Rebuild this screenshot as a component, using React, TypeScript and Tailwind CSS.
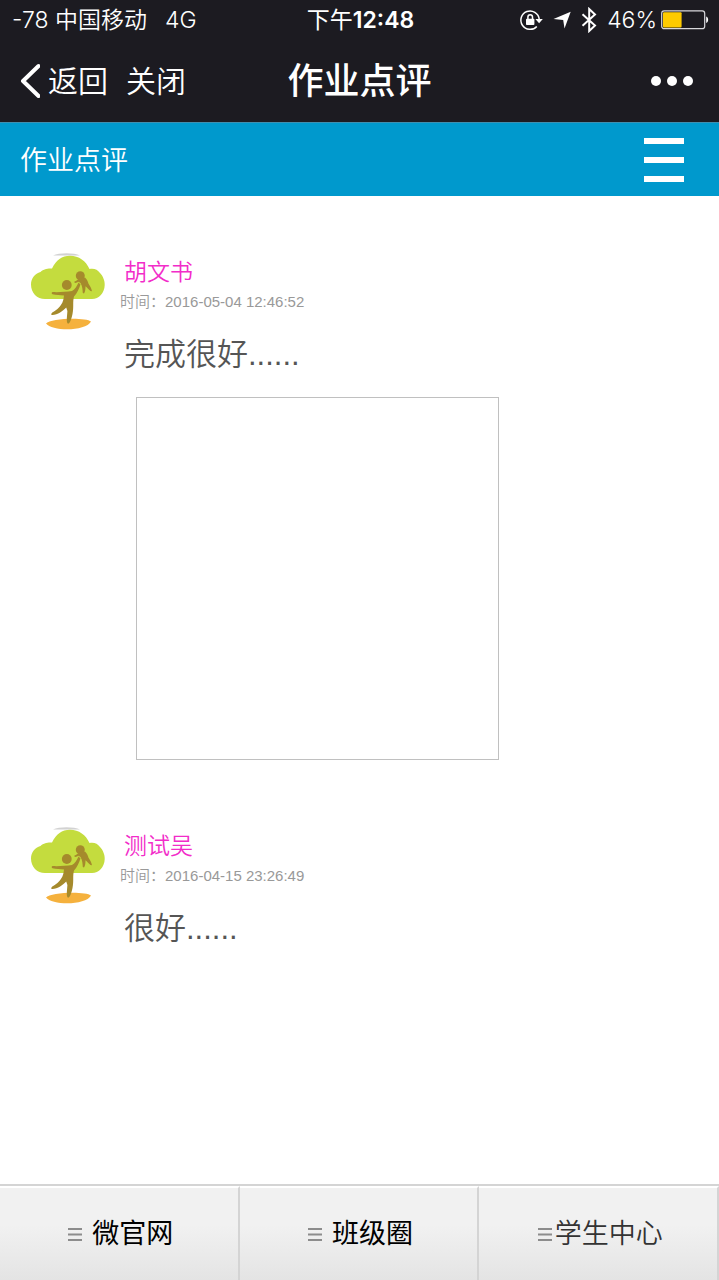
import React from "react";

type Review = {
  name: string;
  time: string;
  text: string;
  hasImage?: boolean;
};

const reviews: Review[] = [
  { name: "胡文书", time: "2016-05-04 12:46:52", text: "完成很好......", hasImage: true },
  { name: "测试吴", time: "2016-04-15 23:26:49", text: "很好......" },
];

function RotationLockIcon() {
  return (
    <svg className="h-6 w-6" viewBox="0 0 24 24" fill="none" aria-hidden="true">
      <path d="M17.8 18.4A9.2 9.2 0 1 1 20.200 11" stroke="#fff" strokeWidth="1.5" />
      <path d="M16.400 11h7.400l-3.700 4.300z" fill="#fff" />
      <rect x="7" y="10.800" width="8.400" height="6.200" rx="0.8" fill="#fff" />
      <path d="M8.900 11.200V9a2.300 2.300 0 0 1 4.600 0v2.200" stroke="#fff" strokeWidth="1.500" />
    </svg>
  );
}

function LocationIcon() {
  return (
    <svg className="h-[18px] w-[18px]" viewBox="0 0 18 18" aria-hidden="true">
      <path d="M17.700.7 11.500 17.600 10.200 8.900.5 8z" fill="#fff" />
    </svg>
  );
}

function BluetoothIcon() {
  return (
    <svg className="h-[26px] w-4" viewBox="0 0 16 26" fill="none" aria-hidden="true">
      <path d="M1.500 7.200 14 18.600 8.200 24V2L14 7.400 1.500 18.800" stroke="#fff" strokeWidth="2" />
    </svg>
  );
}

function BatteryIcon() {
  return (
    <svg className="h-5 w-12" viewBox="0 0 48 20" fill="none" aria-hidden="true">
      <rect x="0.7" y="0.9" width="43" height="17.8" rx="2.5" stroke="#d8d8dc" strokeWidth="1.2" />
      <rect x="2" y="2.2" width="18.6" height="15.2" rx="1" fill="#fecb00" />
      <path d="M45.2 6.6c2.6.9 2.6 5.5 0 6.4z" fill="#fff" />
    </svg>
  );
}

function TreeAvatar() {
  return (
    <svg className="h-20 w-20 shrink-0" viewBox="0 0 80 80" aria-hidden="true">
      <path d="M25 5.500C31 2.600 46 2.600 52 5.500z" fill="#d2d2d2" />
      <path
        d="M17 49C9 49 3 43 3 34.500C3 28.500 7 23.500 12.500 22C14.500 19.500 20 18 24 18.500C28 10 34 5.700 42 5.700C51 5.700 58 11 61.500 19C66 18 69.500 19.500 72 23C75 26 77 31 76.700 35C76.500 43 71 49 64 49Z"
        fill="#c4dc3e"
      />
      <path d="M18 73.500C22 68 58 67 63 71.500C58 81.500 24 81.500 18 73.500Z" fill="#f5b13d" />
      <g fill="#a58a2c">
        <circle cx="38.800" cy="35" r="4.900" />
        <circle cx="52.300" cy="25.700" r="4.500" />
        <path d="M24.500 42C30 42.400 38 41.800 44 41C47 39.500 49 36 50.500 32.500L52.500 34.500C51 39 49 43.500 46 46.500C44.500 52 46 57 44.500 64C43.500 69 42 73 40.200 73.800C38 73 39 67 39.400 61L38.200 57.500C35 61 29 65.500 23.600 65C22.500 64 24 62.500 26 61.500C31 58.500 34.500 54 35.500 49L36 45.500C32 45.500 28 45 24.500 44.300C23.400 43.500 23.400 42.500 24.500 42Z" />
        <path d="M46.500 31.500C48.500 30.800 50 29.500 52 28.500L57 27.500C59 29.500 60 31.500 60.500 33.800C62 36 63.500 38.500 64 41.200L62.500 41C60.500 39.500 59 37.500 57.500 36.200C57.500 39 57.300 41.500 56 43.500L54.800 43C54.500 39.500 54.500 36.500 52.500 33L50.500 31.800C49 32.800 47.800 33.200 46.500 32.800Z" />
      </g>
    </svg>
  );
}

function ListIcon() {
  return (
    <svg className="h-[15px] w-[14px]" viewBox="0 0 14 15" aria-hidden="true">
      <path d="M0 2h14M0 7.500h14M0 13h14" stroke="#8c8c8c" strokeWidth="2" />
    </svg>
  );
}

function StatusBar() {
  return (
    <div className="grid h-10 grid-cols-[1fr_auto_1fr] items-center pl-3 pr-[10px] text-[23px] leading-10">
      <div className="flex items-center whitespace-pre font-[350]">
        <span>-78 中国移动</span>
        <span className="ml-[18px]">4G</span>
      </div>
      <div className="flex">
        <span>下午</span>
        <span className="font-semibold">12:48</span>
      </div>
      <div className="flex items-center justify-end">
        <RotationLockIcon />
        <span className="ml-[10px]"><LocationIcon /></span>
        <span className="ml-[10px]"><BluetoothIcon /></span>
        <span className="ml-[10px] mr-1 font-[350]">46%</span>
        <BatteryIcon />
      </div>
    </div>
  );
}

function ReviewItem({ review }: { review: Review }) {
  return (
    <article className="flex gap-2 pl-7">
      <TreeAvatar />
      <div className="min-w-0 flex-1 pl-1 pt-2">
        <h2 className="pl-1 text-[23px] font-[350] leading-7 text-[#f22cc9]">{review.name}</h2>
        <p className="mt-[2px] text-[15px] leading-7 text-[#999]">
          <span className="font-[350]">时间：</span>
          <time>{review.time}</time>
        </p>
        <p className="mt-[14px] pl-1 text-[31px] font-[350] leading-[50px] text-[#555]">{review.text}</p>
        {review.hasImage && (
          <div className="ml-4 mt-[17px] aspect-square w-[363px] max-w-[90%] border border-[#c0c0c0]" />
        )}
      </div>
    </article>
  );
}

export default function App() {
  return (
    <div className="flex min-h-screen flex-col bg-white font-['Liberation_Sans','Noto_Sans_CJK_SC',sans-serif]">
      <header className="bg-[#1c1b21] font-['Inter','Noto_Sans_CJK_SC',sans-serif] text-white">
        <StatusBar />
        <div className="grid h-[82px] grid-cols-[1fr_auto_1fr] items-center px-5">
          <div className="flex items-center text-[30px] font-[350]">
            <button type="button" className="flex items-center gap-2">
              <svg className="h-9 w-5" viewBox="0 0 20 36" fill="none" aria-hidden="true">
                <path d="M18.500 3 3 18l15.500 15" stroke="#fff" strokeWidth="4" strokeLinecap="round" strokeLinejoin="round" />
              </svg>
              返回
            </button>
            <button type="button" className="ml-[18px]">关闭</button>
          </div>
          <h1 className="text-[36px] font-medium">作业点评</h1>
          <button type="button" aria-label="更多" className="mr-[6px] flex justify-self-end gap-[6px]">
            <span className="h-[10px] w-[10px] rounded-full bg-white" />
            <span className="h-[10px] w-[10px] rounded-full bg-white" />
            <span className="h-[10px] w-[10px] rounded-full bg-white" />
          </button>
        </div>
      </header>

      <div className="flex h-[74px] items-center justify-between border-t border-[#3f8fb0] bg-[#0099cd] pl-5 pr-[35px] text-white">
        <h2 className="pt-1 text-[27px] font-[350]">作业点评</h2>
        <button type="button" aria-label="菜单" className="flex w-10 flex-col gap-[13px]">
          <span className="h-[6px] w-full bg-white" />
          <span className="h-[6px] w-full bg-white" />
          <span className="h-[6px] w-full bg-white" />
        </button>
      </div>

      <main className="flex flex-1 flex-col gap-16 pt-[54px]">
        {reviews.map((review) => (
          <ReviewItem key={review.name} review={review} />
        ))}
      </main>

      <nav className="grid h-24 grid-cols-3 border-t-2 border-[#d4d4d4] text-[27px] text-black">
        <a href="#site" className="flex items-center justify-center gap-[10px] border-r-2 border-t-2 border-r-[#d4d4d4] border-t-white bg-linear-to-b from-[#f1f1f1] from-40% to-[#e4e4e4] pl-1">
          <ListIcon />
          微官网
        </a>
        <a href="#class" className="flex items-center justify-center gap-[10px] border-r-2 border-t-2 border-r-[#d4d4d4] border-t-white bg-linear-to-b from-[#f1f1f1] from-40% to-[#e4e4e4] pl-1">
          <ListIcon />
          班级圈
        </a>
        <a href="#student" className="flex items-center justify-center gap-[3px] border-r-2 border-t-2 border-r-[#d4d4d4] border-t-white bg-linear-to-b from-[#f1f1f1] from-40% to-[#e4e4e4] pl-1 font-[350] text-[#333]">
          <ListIcon />
          学生中心
        </a>
      </nav>
    </div>
  );
}
